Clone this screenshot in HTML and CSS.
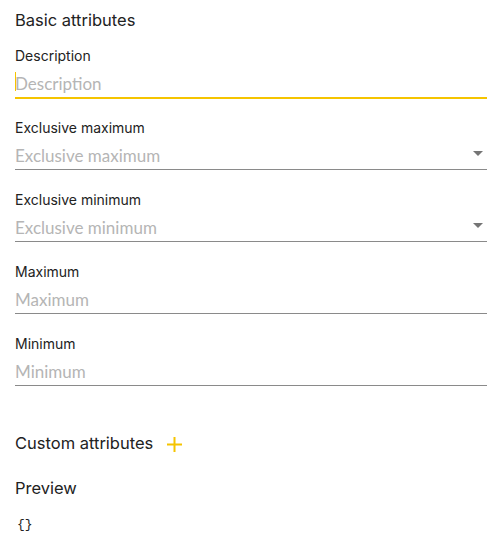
FILE: index.html
```html
<!DOCTYPE html>
<html>
<head>
<meta charset="utf-8">
<link rel="stylesheet" href="styles.css">
</head>
<body>
<div class="panel">
  <h2 class="section-title">Basic attributes</h2>
  <div class="fields">
    <div class="field">
      <label class="field-label">Description</label>
      <div class="input-wrap focused">
        <span class="caret"></span>
        <input class="input" type="text" placeholder="Description">
      </div>
    </div>
    <div class="field">
      <label class="field-label">Exclusive maximum</label>
      <div class="input-wrap">
        <input class="input" type="text" placeholder="Exclusive maximum">
        <span class="arrow"></span>
      </div>
    </div>
    <div class="field">
      <label class="field-label">Exclusive minimum</label>
      <div class="input-wrap">
        <input class="input" type="text" placeholder="Exclusive minimum">
        <span class="arrow"></span>
      </div>
    </div>
    <div class="field">
      <label class="field-label">Maximum</label>
      <div class="input-wrap">
        <input class="input" type="text" placeholder="Maximum">
      </div>
    </div>
    <div class="field">
      <label class="field-label">Minimum</label>
      <div class="input-wrap">
        <input class="input" type="text" placeholder="Minimum">
      </div>
    </div>
  </div>
  <div class="custom-row">
    <h2 class="section-title">Custom attributes</h2>
    <button class="add-btn" type="button" aria-label="Add">
      <svg width="15" height="15" viewBox="0 0 15 15"><path d="M7.5 0v15M0 7.5h15" stroke="#f5c400" stroke-width="2" fill="none"/></svg>
    </button>
  </div>
  <h2 class="section-title preview-title">Preview</h2>
  <pre class="preview">{}</pre>
</div>
</body>
</html>
```
FILE: styles.css
```css
html, body {
  margin: 0;
  padding: 0;
  background: #ffffff;
}
.panel {
  padding: 8px 14px 0 15px;
  font-family: Inter, "Noto Sans", sans-serif;
  color: #222222;
}
.section-title {
  margin: 0;
  font-size: 16.5px;
  font-weight: 400;
  line-height: 24px;
  color: #222222;
}
.fields {
  margin-top: 14px;
  display: flex;
  flex-direction: column;
}
.field {
  height: 72px;
  display: flex;
  flex-direction: column;
}
.field-label {
  font-size: 14px;
  line-height: 20px;
  color: #222222;
}
.input-wrap {
  position: relative;
  height: 31px;
  display: flex;
  align-items: center;
  border-bottom: 1px solid #8a8a8a;
}
.input-wrap.focused {
  border-bottom: 1px solid #f5c400;
  box-shadow: 0 1px 0 #f5c400;
}
.input {
  flex: 1;
  min-width: 0;
  border: none;
  outline: none;
  padding: 3px 0 0 0;
  margin: 0;
  height: 31px;
  box-sizing: border-box;
  background: transparent;
  font-family: Lato, "Noto Sans", sans-serif;
  font-size: 17px;
  color: #222;
}
.input::placeholder {
  color: #b5b5b5;
}
.caret {
  position: absolute;
  left: 0;
  top: 6px;
  width: 1px;
  height: 19px;
  background: #f5c400;
}
.arrow {
  width: 0;
  height: 0;
  margin-right: 4px;
  border-left: 5px solid transparent;
  border-right: 5px solid transparent;
  border-top: 5px solid #757575;
}
.custom-row {
  margin-top: 25px;
  display: flex;
  align-items: center;
  gap: 14px;
}
.add-btn {
  border: none;
  background: none;
  padding: 0;
  margin-top: 2px;
  width: 15px;
  height: 15px;
  display: flex;
  cursor: pointer;
}
.preview-title {
  margin-top: 21px;
}
.preview {
  margin: 16px 0 0 2px;
  font-family: "Liberation Mono", monospace;
  font-size: 13px;
  line-height: 18px;
  color: #222;
}
```
